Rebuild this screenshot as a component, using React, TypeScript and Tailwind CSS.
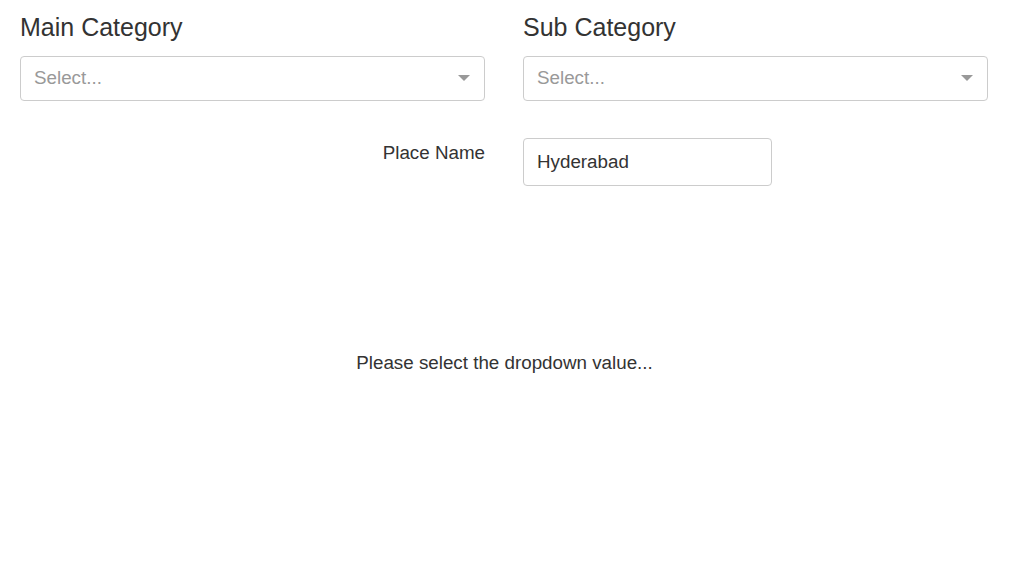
import React from "react";

function Caret() {
  return (
    <svg width="12" height="7" viewBox="0 0 12 7" className="shrink-0">
      <path d="M0 0 L12 0 L6 6 Z" fill="#999" />
    </svg>
  );
}

function SelectBox() {
  return (
    <div className="flex h-[45px] items-center justify-between rounded-[4px] border border-[#cccccc] bg-white pl-[13px] pr-[14px]">
      <span className="text-[18.8px] text-[#999999]">Select...</span>
      <Caret />
    </div>
  );
}

export default function App() {
  return (
    <div
      className="min-h-[579px] w-[1009px] bg-white text-[#333333]"
      style={{ fontFamily: '"Liberation Sans", Arial, sans-serif' }}
    >
      <div className="grid grid-cols-2 gap-x-[38px] pl-[20px] pr-[21px] pt-[13px]">
        <div>
          <h3 className="mb-[15px] text-[25px] leading-[28px]">Main Category</h3>
          <SelectBox />
        </div>
        <div>
          <h3 className="mb-[15px] text-[25px] leading-[28px]">Sub Category</h3>
          <SelectBox />
        </div>
        <div className="mt-[37px] text-right text-[18.8px] leading-[30px]">
          <label>Place Name</label>
        </div>
        <div className="mt-[37px]">
          <div className="flex h-[48px] w-[249px] items-center rounded-[4px] border border-[#cccccc] bg-white px-[13px] text-[18.8px] text-[#333333]">
            Hyderabad
          </div>
        </div>
      </div>
      <div className="mt-[164px] text-center text-[18.8px] leading-[26px]">
        Please select the dropdown value...
      </div>
    </div>
  );
}
